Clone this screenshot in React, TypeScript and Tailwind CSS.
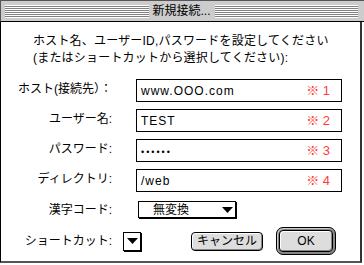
import React from "react";

const font = "font-['Liberation_Sans','Noto_Sans_CJK_JP',sans-serif]";

function Stripes() {
  return (
    <div className="h-[13px] flex-1 bg-[repeating-linear-gradient(to_bottom,#ffffff_0px,#ffffff_1px,#808080_1px,#808080_2px)]" />
  );
}

function Field({ label, value, mark }: { label: string; value: React.ReactNode; mark: string }) {
  return (
    <div className="flex items-start">
      <div className="w-[111px] pt-[2px] text-right text-[12px] leading-[16px] whitespace-nowrap">{label}</div>
      <div className="ml-[24px] flex h-[23px] w-[206px] items-center justify-between border border-black bg-white pl-[4px] pr-[11px] text-[12px]">
        <span className="tracking-[1px]">{value}</span>
        <span className="text-[13px] text-[#ff3b3b]">{mark}</span>
      </div>
    </div>
  );
}

function Triangle() {
  return (
    <svg width="11" height="6" viewBox="0 0 11 6">
      <polygon points="0,0 11,0 5.5,6" fill="#000" />
    </svg>
  );
}

export default function App() {
  return (
    <div className={`relative h-[265px] w-[364px] overflow-hidden bg-white text-black ${font}`}>
      {/* title bar */}
      <div className="flex h-[22px] w-[364px] items-center border-t border-l border-[#555] border-b border-b-black bg-[#cccccc] pl-[4px] pr-[6px]">
        <Stripes />
        <div className="px-[4px] text-[12px] leading-[14px]">新規接続...</div>
        <Stripes />
      </div>

      {/* body */}
      <div className="h-[241px] w-[362px] border-l border-black border-r-2 border-r-[#333] border-b-2 border-b-[#555]">
        <div className="pl-[32px] pt-[11px] text-[12px] leading-[17px] tracking-[0.2px] whitespace-nowrap">
          <div>ホスト名、ユーザーID,パスワードを設定してください</div>
          <div>(またはショートカットから選択してください):</div>
        </div>

        <div className="mt-[12px] flex flex-col gap-[7px]">
          <Field label="ホスト(接続先）：" value="www.OOO.com" mark="※ 1" />
          <Field label="ユーザー名:" value="TEST" mark="※ 2" />
          <Field label="パスワード:" value={<span className="text-[9px] tracking-[2px]">••••••</span>} mark="※ 3" />
          <Field label="ディレクトリ:" value="/web" mark="※ 4" />
        </div>

        <div className="mt-[9px] flex items-center">
          <div className="w-[111px] text-right text-[12px] leading-[16px]">漢字コード:</div>
          <div className="ml-[26px] flex h-[17px] w-[98px] items-center justify-between border border-black bg-white pl-[14px] pr-[2px] text-[12px] shadow-[1px_1px_0_#000]">
            <span>無変換</span>
            <Triangle />
          </div>
        </div>

        <div className="mt-[9px] flex items-center">
          <div className="w-[111px] text-right text-[12px] leading-[16px]">ショートカット:</div>
          <div className="ml-[11px] flex h-[19px] w-[18px] items-center justify-center border border-black bg-white shadow-[1px_1px_0_#000]">
            <Triangle />
          </div>
          <div className="ml-[50px] flex h-[19px] w-[72px] items-center justify-center rounded-[4px] border border-black bg-[#dddddd] text-[12px] shadow-[inset_1px_1px_0_#fff,inset_-1px_-1px_0_#888]">
            キャンセル
          </div>
          <div className="ml-[13px] rounded-[7px] border border-black bg-[#888] p-[2px] shadow-[inset_1px_1px_0_#ccc]">
            <div className="flex h-[22px] w-[54px] items-center justify-center rounded-[4px] border border-black bg-[#dddddd] text-[12px] shadow-[inset_1px_1px_0_#fff,inset_-1px_-1px_0_#888]">
              OK
            </div>
          </div>
        </div>
      </div>
    </div>
  );
}
